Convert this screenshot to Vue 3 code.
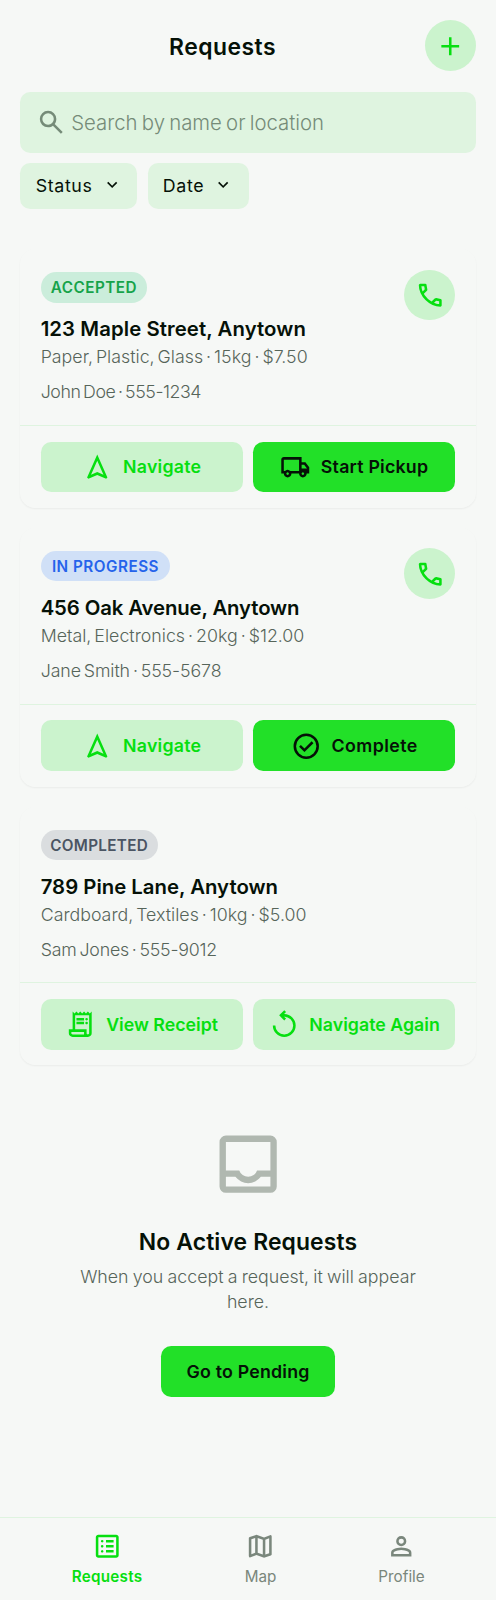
<script setup>
const icons = {
  add: 'M440-440H200v-80h240v-240h80v240h240v80H520v240h-80v-240Z',
  search: 'M784-120 532-372q-30 24-69 38t-83 14q-109 0-184.5-75.5T120-580q0-109 75.5-184.5T380-840q109 0 184.5 75.5T640-580q0 44-14 83t-38 69l252 252-56 56ZM380-400q75 0 127.5-52.5T560-580q0-75-52.5-127.5T380-760q-75 0-127.5 52.5T200-580q0 75 52.5 127.5T380-400Z',
  expand: 'M480-344 240-584l56-56 184 184 184-184 56 56-240 240Z',
  call: 'M798-120q-125 0-247-54.5T329-329Q229-429 174.5-551T120-798q0-18 12-30t30-12h162q14 0 25 9.5t13 22.5l26 140q2 16-1 27t-11 19l-97 98q20 37 47.5 71.5T387-386q31 31 65 57.5t72 48.5l94-94q9-9 23.5-13.5T670-390l138 28q14 4 23 14.5t9 23.5v162q0 18-12 30t-30 12ZM241-600l66-66-17-94h-89q5 41 14 81t26 79Zm358 358q39 17 79.5 27t81.5 13v-88l-94-19-67 67Z',
  navigation: 'm200-120-40-40 320-720 320 720-40 40-280-120-280 120Zm84-124 196-84 196 84-196-440-196 440Z',
  truck: 'M240-160q-50 0-85-35t-35-85H40v-440q0-33 23.5-56.5T120-800h560v160h120l120 160v200h-80q0 50-35 85t-85 35q-50 0-85-35t-35-85H360q0 50-35 85t-85 35Zm0-80q17 0 28.5-11.5T280-280q0-17-11.5-28.5T240-320q-17 0-28.5 11.5T200-280q0 17 11.5 28.5T240-240ZM120-360h32q17-18 39-29t49-11q27 0 49 11t39 29h272v-360H120v360Zm600 120q17 0 28.5-11.5T760-280q0-17-11.5-28.5T720-320q-17 0-28.5 11.5T680-280q0 17 11.5 28.5T720-240Zm-40-200h170l-90-120h-80v120Z',
  check: 'm424-296 282-282-56-56-226 226-114-114-56 56 170 170Zm56 216q-83 0-156-31.5T197-197q-54-54-85.5-127T80-480q0-83 31.5-156T197-763q54-54 127-85.5T480-880q83 0 156 31.5T763-763q54 54 85.5 127T880-480q0 83-31.5 156T763-197q-54 54-127 85.5T480-80Zm0-80q134 0 227-93t93-227q0-134-93-227t-227-93q-134 0-227 93t-93 227q0 134 93 227t227 93Z',
  receipt: 'M240-80q-50 0-85-35t-35-85v-120h120v-560l60 60 60-60 60 60 60-60 60 60 60-60 60 60 60-60 60 60 60-60v680q0 50-35 85t-85 35H240Zm480-80q17 0 28.5-11.5T760-200v-560H320v440h360v120q0 17 11.5 28.5T720-160ZM360-600v-80h240v80H360Zm0 120v-80h240v80H360Zm320-120q-17 0-28.5-11.5T640-640q0-17 11.5-28.5T680-680q17 0 28.5 11.5T720-640q0 17-11.5 28.5T680-600Zm0 120q-17 0-28.5-11.5T640-520q0-17 11.5-28.5T680-560q17 0 28.5 11.5T720-520q0 17-11.5 28.5T680-480ZM240-160h360v-80H200v40q0 17 11.5 28.5T240-160Z',
  replay: 'M480-80q-75 0-140.5-28.5t-114-77q-48.5-48.5-77-114T120-440h80q0 117 81.5 198.5T480-160q117 0 198.5-81.5T760-440q0-117-81.5-198.5T480-720h-6l62 62-56 58-160-160 160-160 56 58-62 62h6q75 0 140.5 28.5t114 77q48.5 48.5 77 114T840-440q0 75-28.5 140.5t-77 114q-48.5 48.5-114 77T480-80Z',
  inbox: 'M200-120q-33 0-56.5-23.5T120-200v-560q0-33 23.5-56.5T200-840h560q33 0 56.5 23.5T840-760v560q0 33-23.5 56.5T760-120H200Zm0-80h560v-120H640q-30 38-71.5 59T480-240q-47 0-88.5-21T320-320H200v120Zm280-120q38 0 69-22t43-58h168v-360H200v360h168q12 36 43 58t69 22Z',
  list: 'M320-280q17 0 28.5-11.5T360-320q0-17-11.5-28.5T320-360q-17 0-28.5 11.5T280-320q0 17 11.5 28.5T320-280Zm0-160q17 0 28.5-11.5T360-480q0-17-11.5-28.5T320-520q-17 0-28.5 11.5T280-480q0 17 11.5 28.5T320-440Zm0-160q17 0 28.5-11.5T360-640q0-17-11.5-28.5T320-680q-17 0-28.5 11.5T280-640q0 17 11.5 28.5T320-600Zm120 320h240v-80H440v80Zm0-160h240v-80H440v80Zm0-160h240v-80H440v80ZM200-120q-33 0-56.5-23.5T120-200v-560q0-33 23.5-56.5T200-840h560q33 0 56.5 23.5T840-760v560q0 33-23.5 56.5T760-120H200Zm0-80h560v-560H200v560Z',
  map: 'm600-120-240-84-186 72q-20 8-37-4.5T120-170v-560q0-13 7.5-23t20.5-15l212-72 240 84 186-72q20-8 37 4.5t17 33.5v560q0 13-7.5 23T812-192l-212 72Zm-40-98v-468l-160-56v468l160 56Zm80 0 120-40v-474l-120 46v468Zm-440-10 120-46v-468l-120 40v474Z',
  person: 'M480-480q-66 0-113-47t-47-113q0-66 47-113t113-47q66 0 113 47t47 113q0 66-47 113t-113 47ZM160-160v-112q0-34 17.5-62.5T224-378q62-31 126-46.5T480-440q66 0 130 15.5T736-378q29 15 46.5 43.5T800-272v112H160Zm80-80h480v-32q0-11-5.5-20T700-306q-54-27-109-40.5T480-360q-56 0-111 13.5T260-306q-9 5-14.5 14t-5.5 20v32Zm240-320q33 0 56.5-23.5T560-640q0-33-23.5-56.5T480-720q-33 0-56.5 23.5T400-640q0 33 23.5 56.5T480-560Z',
}

const filters = [
  { label: 'Status', key: 'status' },
  { label: 'Date', key: 'date' },
]

const requests = [
  {
    status: 'ACCEPTED', tone: 'accepted', address: '123 Maple Street, Anytown',
    details: 'Paper, Plastic, Glass · 15kg · $7.50', contact: 'John Doe · 555-1234', callable: true,
    actions: [
      { label: 'Navigate', icon: 'navigation', kind: 'soft' },
      { label: 'Start Pickup', icon: 'truck', kind: 'solid' },
    ],
  },
  {
    status: 'IN PROGRESS', tone: 'progress', address: '456 Oak Avenue, Anytown',
    details: 'Metal, Electronics · 20kg · $12.00', contact: 'Jane Smith · 555-5678', callable: true,
    actions: [
      { label: 'Navigate', icon: 'navigation', kind: 'soft' },
      { label: 'Complete', icon: 'check', kind: 'solid' },
    ],
  },
  {
    status: 'COMPLETED', tone: 'completed', address: '789 Pine Lane, Anytown',
    details: 'Cardboard, Textiles · 10kg · $5.00', contact: 'Sam Jones · 555-9012', callable: false,
    actions: [
      { label: 'View Receipt', icon: 'receipt', kind: 'soft' },
      { label: 'Navigate Again', icon: 'replay', kind: 'soft' },
    ],
  },
]

const tabs = [
  { label: 'Requests', icon: 'list', key: 'requests', active: true },
  { label: 'Map', icon: 'map', key: 'map', active: false },
  { label: 'Profile', icon: 'person', key: 'profile', active: false },
]
</script>

<template>
  <div class="screen">
    <header class="header">
      <h1>Requests</h1>
      <button class="round" aria-label="Add request">
        <svg class="icon" viewBox="0 -960 960 960"><path :d="icons.add" /></svg>
      </button>
    </header>

    <div class="search">
      <svg class="icon" viewBox="0 -960 960 960"><path :d="icons.search" /></svg>
      <span>Search by name or location</span>
    </div>

    <div class="filters">
      <button v-for="f in filters" :key="f.key" class="chip" :class="f.key">
        <span>{{ f.label }}</span>
        <svg class="icon small" viewBox="0 -960 960 960"><path :d="icons.expand" /></svg>
      </button>
    </div>

    <main class="cards">
      <article v-for="r in requests" :key="r.address" class="card" :class="r.tone">
        <div class="info">
          <div class="text">
            <span class="badge">{{ r.status }}</span>
            <h2>{{ r.address }}</h2>
            <p class="details">{{ r.details }}</p>
            <p class="contact">{{ r.contact }}</p>
          </div>
          <button v-if="r.callable" class="round" aria-label="Call">
            <svg class="icon" viewBox="0 -960 960 960"><path :d="icons.call" /></svg>
          </button>
        </div>
        <div class="actions">
          <button v-for="a in r.actions" :key="a.label" class="action" :class="[a.kind, a.icon]">
            <svg class="icon" viewBox="0 -960 960 960"><path :d="icons[a.icon]" /></svg>
            <span>{{ a.label }}</span>
          </button>
        </div>
      </article>
    </main>

    <section class="empty">
      <svg class="icon large" viewBox="0 -960 960 960"><path :d="icons.inbox" /></svg>
      <h3>No Active Requests</h3>
      <p>When you accept a request, it will appear here.</p>
      <button class="pending">Go to Pending</button>
    </section>

    <nav class="tabs">
      <a v-for="t in tabs" :key="t.key" class="tab" :class="[t.key, { active: t.active }]">
        <svg class="icon" viewBox="0 -960 960 960"><path :d="icons[t.icon]" /></svg>
        <span>{{ t.label }}</span>
      </a>
    </nav>
  </div>
</template>

<style>
body {
  margin: 0;
  background: #f6f8f6;
}
</style>

<style scoped>
.screen {
  box-sizing: border-box;
  display: flex;
  flex-direction: column;
  width: 496px;
  height: 1600px;
  overflow: hidden;
  background: #f6f8f6;
  color: #051107;
  font-family: Inter, "Noto Sans", sans-serif;
}
h1, h2, h3, p { margin: 0; }
button {
  border: 0;
  padding: 0;
  font: inherit;
  color: inherit;
}
span, h1, h2, h3 { white-space: nowrap; }
.icon {
  display: block;
  flex: none;
  width: 30.5px;
  height: 30.5px;
  fill: currentColor;
}
.icon.small { width: 20.35px; height: 20.35px; }
.icon.large { width: 76.3px; height: 76.3px; color: #b0b8b0; }

.header {
  display: flex;
  align-items: center;
  padding: 20.35px 20.35px 0;
}
.header h1 {
  flex: 1;
  padding-top: 2.5px;
  text-align: center;
  font-size: 22.9px;
  line-height: 28.6px;
  font-weight: 600;
  letter-spacing: 0.5px;
}
.round {
  display: flex;
  align-items: center;
  justify-content: center;
  flex: none;
  width: 50.9px;
  height: 50.9px;
  border-radius: 50%;
  background: #cbf3cd;
  color: #06df10;
}

.search {
  display: flex;
  align-items: center;
  gap: 5.1px;
  height: 61px;
  margin: 20.35px 20.35px 0;
  padding-left: 15.3px;
  border-radius: 10.2px;
  background: #dff4e0;
  color: #758b78;
}
.search span {
  font-size: 20.35px;
  font-weight: 300;
  word-spacing: -1.5px;
}

.filters {
  display: flex;
  gap: 10.2px;
  margin: 10.2px 20.35px 0;
}
.chip {
  box-sizing: border-box;
  display: flex;
  align-items: center;
  justify-content: space-between;
  height: 45.8px;
  padding: 0 15.3px;
  border-radius: 10.2px;
  background: #dff4e0;
  font-size: 17.8px;
  letter-spacing: 0.65px;
}
.chip.status { width: 117px; }
.chip.date { width: 101.6px; }

.cards {
  display: flex;
  flex-direction: column;
  gap: 20.35px;
  margin: 40.7px 20.35px 0;
}
.card {
  box-sizing: border-box;
  height: 258.5px;
  border-radius: 15.3px;
  box-shadow: 0 1px 2px rgba(0, 0, 0, 0.05);
}
.info {
  box-sizing: border-box;
  display: flex;
  justify-content: space-between;
  height: 175.5px;
  padding: 20.35px;
}
.text { padding-top: 2.5px; }
.badge {
  box-sizing: border-box;
  display: flex;
  align-items: center;
  justify-content: center;
  height: 30.5px;
  border-radius: 15.3px;
  font-size: 15.26px;
  font-weight: 600;
  letter-spacing: 0.5px;
}
.accepted .badge { width: 106.5px; background: #cbeddb; color: #16a34a; }
.progress .badge { width: 129.5px; background: #d0e0f7; color: #2563eb; }
.completed .badge { width: 117px; background: #dadddf; color: #4b5563; letter-spacing: 0.3px; }
.text h2 {
  margin-top: 12.5px;
  font-size: 20.35px;
  line-height: 28px;
  font-weight: 600;
}
.accepted h2 { letter-spacing: 0.08px; }
.progress h2 { letter-spacing: -0.12px; }
.details, .contact {
  font-size: 17.8px;
  line-height: 26.7px;
  font-weight: 300;
  color: #56655a;
  white-space: nowrap;
  word-spacing: -2px;
}
.details { padding-top: 0.8px; }
.contact { margin-top: 8.4px; }
.accepted .contact { letter-spacing: -0.44px; }
.progress .contact { letter-spacing: -0.1px; }
.completed .contact { letter-spacing: -0.2px; }
.actions {
  display: flex;
  gap: 10.2px;
  padding: 15.8px 20.35px 0;
  border-top: 1.27px solid #dff4e0;
}
.action {
  display: flex;
  flex: 1 1 0;
  align-items: center;
  justify-content: center;
  gap: 10.2px;
  height: 50.9px;
  border-radius: 10.2px;
  font-size: 17.8px;
  font-weight: 600;
}
.action.navigation, .action.truck { letter-spacing: 0.22px; }
.action.check { letter-spacing: 0.4px; }
.soft { background: #cbf3cd; color: #06df10; }
.solid { background: #22e028; color: #051107; }

.empty {
  display: flex;
  flex-direction: column;
  align-items: center;
  padding-top: 60.5px;
}
.empty h3 {
  margin-top: 25.5px;
  font-size: 22.9px;
  line-height: 28.6px;
  font-weight: 600;
  letter-spacing: 0.12px;
}
.empty p {
  width: 350px;
  margin-top: 7.7px;
  text-align: center;
  font-size: 17.8px;
  line-height: 25.4px;
  font-weight: 300;
  color: #56655a;
  word-spacing: -0.8px;
}
.pending {
  width: 173.5px;
  height: 50.9px;
  margin-top: 30.8px;
  border-radius: 10.2px;
  background: #22e028;
  color: #051107;
  font-size: 17.8px;
  font-weight: 600;
  letter-spacing: 0.2px;
}

.tabs {
  box-sizing: border-box;
  display: flex;
  justify-content: space-around;
  height: 83px;
  margin-top: auto;
  padding: 13px 20.35px 0;
  border-top: 1.27px solid #dff4e0;
}
.tab {
  display: flex;
  flex-direction: column;
  align-items: center;
  gap: 3.4px;
  color: #7a877c;
  font-size: 15.26px;
  line-height: 23px;
  font-weight: 400;
}
.tab.requests { width: 70px; letter-spacing: 0.25px; }
.tab.map { width: 30.5px; }
.tab.profile { width: 45px; }
.tab.active { color: #06df10; font-weight: 600; }
</style>
